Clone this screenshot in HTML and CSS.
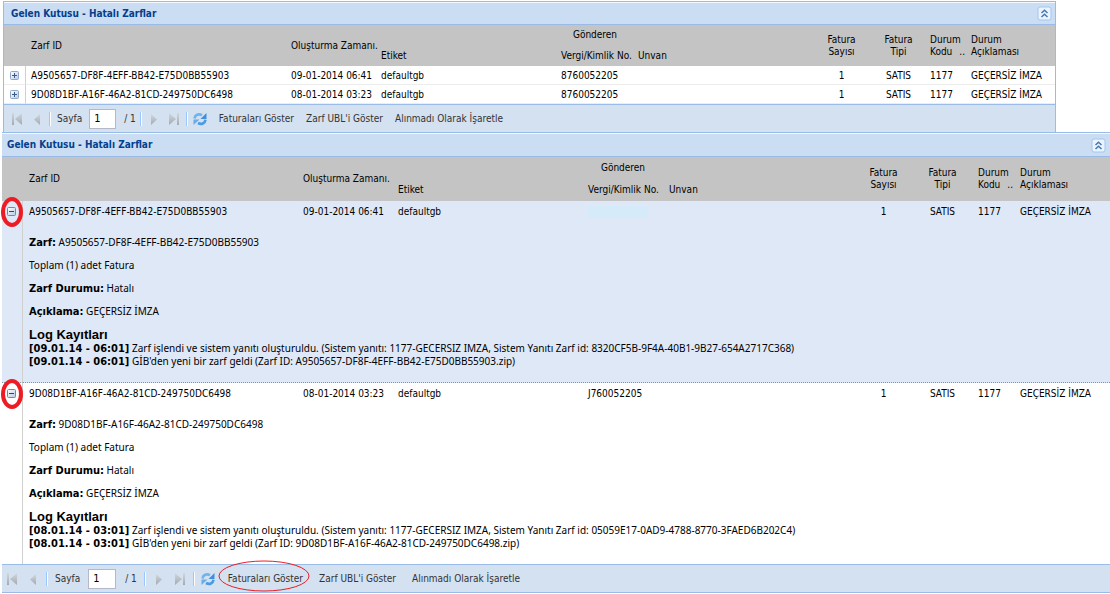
FILE: index.html
```
<!DOCTYPE html>
<html lang="tr">
<head>
<meta charset="utf-8">
<title>Gelen Kutusu - Hatalı Zarflar</title>
<link rel="stylesheet" href="styles.css">
</head>
<body>
<svg width="0" height="0" class="defs" aria-hidden="true">
  <defs>
    <linearGradient id="gray" x1="0" y1="0" x2="0" y2="1"><stop offset="0" stop-color="#d3d7dc"/><stop offset="1" stop-color="#a4aab1"/></linearGradient>
    <linearGradient id="box" x1="0" y1="0" x2="1" y2="1"><stop offset="0" stop-color="#fff"/><stop offset="1" stop-color="#b5cbe6"/></linearGradient>
    <symbol id="first" viewBox="0 0 16 16"><path d="M3 2h2v12H3zM13 2v12L6 8z" fill="url(#gray)"/></symbol>
    <symbol id="prev" viewBox="0 0 16 16"><path d="M11 3v11L5 8.500z" fill="url(#gray)"/></symbol>
    <symbol id="next" viewBox="0 0 16 16"><path d="M5 3v11l6-5.500z" fill="url(#gray)"/></symbol>
    <symbol id="last" viewBox="0 0 16 16"><path d="M11 2h2v12h-2zM3 2v12l7-6z" fill="url(#gray)"/></symbol>
    <symbol id="refresh" viewBox="0 0 16 16">
      <path d="M2.500 7.500C3 4 6.500 2.200 10 4.200" fill="none" stroke="#6fb4ee" stroke-width="2.600"/>
      <path d="M14.500 2v6H8.500z" fill="#3f8fdc"/>
      <path d="M13.500 8.800C13 12.400 9.500 14 6 12" fill="none" stroke="#4a9be4" stroke-width="2.600"/>
      <path d="M1.500 14V8.500h6z" fill="#66adea"/>
    </symbol>
    <symbol id="plus" viewBox="0 0 9 9"><rect x=".5" y=".5" width="8" height="8" rx="1" fill="url(#box)" stroke="#8fa8c8"/><path d="M2 4.500h5M4.500 2v5" stroke="#3d5a80"/></symbol>
    <symbol id="minus" viewBox="0 0 9 9"><rect x=".5" y=".5" width="8" height="8" rx="1" fill="url(#box)" stroke="#6c8ab0"/><path d="M2 4.500h5" stroke="#26466f"/></symbol>
    <symbol id="collapse" viewBox="0 0 15 15"><rect x="1" y="1" width="13" height="13" rx="2" fill="#eaf4fe" stroke="#a3c6ee"/><path d="M4.500 7l3-2.800 3 2.800M4.500 11l3-2.800 3 2.800" fill="none" stroke="#4677b0" stroke-width="1.500"/></symbol>
  </defs>
</svg>

<section class="panel panel-top">
  <header class="title"><h1>Gelen Kutusu - Hatalı Zarflar</h1><button class="icon-btn" aria-label="Daralt"><svg width="15" height="15"><use href="#collapse"/></svg></button></header>
  <table>
    <colgroup><col class="c-exp"><col class="c-id"><col class="c-date"><col class="c-tag"><col class="c-tax"><col><col class="c-count"><col class="c-type"><col class="c-code"><col class="c-desc"></colgroup>
    <thead>
      <tr><th rowspan="2"></th><th rowspan="2">Zarf ID</th><th rowspan="2">Oluşturma Zamanı.</th><th></th><th class="mid">Gönderen</th><th></th><th rowspan="2" class="mid">Fatura<br>Sayısı</th><th rowspan="2" class="mid">Fatura<br>Tipi</th><th rowspan="2"><span class="code">Durum <span>Kodu</span><span>..</span></span></th><th rowspan="2">Durum<br>Açıklaması</th></tr>
      <tr><th>Etiket</th><th>Vergi/Kimlik No.</th><th>Unvan</th></tr>
    </thead>
    <tbody>
      <tr><td class="exp"><button class="icon-btn" aria-label="Genişlet"><svg width="9" height="9"><use href="#plus"/></svg></button></td><td>A9505657-DF8F-4EFF-BB42-E75D0BB55903</td><td>09-01-2014 06:41</td><td>defaultgb</td><td>8760052205</td><td></td><td class="mid">1</td><td class="mid">SATIS</td><td>1177</td><td>GEÇERSİZ İMZA</td></tr>
      <tr><td class="exp"><button class="icon-btn" aria-label="Genişlet"><svg width="9" height="9"><use href="#plus"/></svg></button></td><td>9D08D1BF-A16F-46A2-81CD-249750DC6498</td><td>08-01-2014 03:23</td><td>defaultgb</td><td>8760052205</td><td></td><td class="mid">1</td><td class="mid">SATIS</td><td>1177</td><td>GEÇERSİZ İMZA</td></tr>
    </tbody>
  </table>
  <footer class="bar">
    <button class="icon-btn" aria-label="İlk sayfa"><svg width="16" height="16"><use href="#first"/></svg></button>
    <button class="icon-btn" aria-label="Önceki sayfa"><svg width="16" height="16"><use href="#prev"/></svg></button>
    <i class="sep"></i>
    <label for="page1">Sayfa</label><input id="page1" type="text" value="1"><span class="total">/ 1</span>
    <i class="sep"></i>
    <button class="icon-btn" aria-label="Sonraki sayfa"><svg width="16" height="16"><use href="#next"/></svg></button>
    <button class="icon-btn" aria-label="Son sayfa"><svg width="16" height="16"><use href="#last"/></svg></button>
    <i class="sep"></i>
    <button class="icon-btn" aria-label="Yenile"><svg width="16" height="16"><use href="#refresh"/></svg></button>
    <div class="actions"><button>Faturaları Göster</button><button>Zarf UBL'i Göster</button><button>Alınmadı Olarak İşaretle</button></div>
  </footer>
</section>

<section class="panel panel-full">
  <header class="title"><h1>Gelen Kutusu - Hatalı Zarflar</h1><button class="icon-btn" aria-label="Daralt"><svg width="15" height="15"><use href="#collapse"/></svg></button></header>
  <table>
    <colgroup><col class="c-exp"><col class="c-id"><col class="c-date"><col class="c-tag"><col class="c-tax"><col><col class="c-count"><col class="c-type"><col class="c-code"><col class="c-desc"></colgroup>
    <thead>
      <tr><th rowspan="2"></th><th rowspan="2">Zarf ID</th><th rowspan="2">Oluşturma Zamanı.</th><th></th><th class="mid">Gönderen</th><th></th><th rowspan="2" class="mid">Fatura<br>Sayısı</th><th rowspan="2" class="mid">Fatura<br>Tipi</th><th rowspan="2"><span class="code">Durum <span>Kodu</span><span>..</span></span></th><th rowspan="2">Durum<br>Açıklaması</th></tr>
      <tr><th>Etiket</th><th>Vergi/Kimlik No.</th><th>Unvan</th></tr>
    </thead>
    <tbody class="selected">
      <tr><td class="exp" rowspan="2"><span class="marked"><button class="icon-btn" aria-label="Daralt"><svg width="9" height="9"><use href="#minus"/></svg></button><svg class="ring" width="22" height="30" viewBox="0 0 22 30"><ellipse cx="11" cy="15" rx="9" ry="13"/></svg></span></td><td>A9505657-DF8F-4EFF-BB42-E75D0BB55903</td><td>09-01-2014 06:41</td><td>defaultgb</td><td><span class="smudge"></span></td><td></td><td class="mid">1</td><td class="mid">SATIS</td><td>1177</td><td>GEÇERSİZ İMZA</td></tr>
      <tr><td class="detail" colspan="9">
        <p><b>Zarf:</b> A9505657-DF8F-4EFF-BB42-E75D0BB55903</p>
        <p>Toplam (1) adet Fatura</p>
        <p><b>Zarf Durumu:</b> Hatalı</p>
        <p><b>Açıklama:</b> GEÇERSİZ İMZA</p>
        <h2>Log Kayıtları</h2>
        <div><b>[09.01.14 - 06:01]</b> Zarf işlendi ve sistem yanıtı oluşturuldu. (Sistem yanıtı: 1177-GECERSIZ IMZA, Sistem Yanıtı Zarf id: 8320CF5B-9F4A-40B1-9B27-654A2717C368)</div>
        <div><b>[09.01.14 - 06:01]</b> GİB'den yeni bir zarf geldi (Zarf ID: A9505657-DF8F-4EFF-BB42-E75D0BB55903.zip)</div>
      </td></tr>
    </tbody>
    <tbody>
      <tr><td class="exp" rowspan="2"><span class="marked"><button class="icon-btn" aria-label="Daralt"><svg width="9" height="9"><use href="#minus"/></svg></button><svg class="ring" width="22" height="30" viewBox="0 0 22 30"><ellipse cx="11" cy="15" rx="9" ry="13"/></svg></span></td><td>9D08D1BF-A16F-46A2-81CD-249750DC6498</td><td>08-01-2014 03:23</td><td>defaultgb</td><td>J760052205</td><td></td><td class="mid">1</td><td class="mid">SATIS</td><td>1177</td><td>GEÇERSİZ İMZA</td></tr>
      <tr><td class="detail" colspan="9">
        <p><b>Zarf:</b> 9D08D1BF-A16F-46A2-81CD-249750DC6498</p>
        <p>Toplam (1) adet Fatura</p>
        <p><b>Zarf Durumu:</b> Hatalı</p>
        <p><b>Açıklama:</b> GEÇERSİZ İMZA</p>
        <h2>Log Kayıtları</h2>
        <div><b>[08.01.14 - 03:01]</b> Zarf işlendi ve sistem yanıtı oluşturuldu. (Sistem yanıtı: 1177-GECERSIZ IMZA, Sistem Yanıtı Zarf id: 05059E17-0AD9-4788-8770-3FAED6B202C4)</div>
        <div><b>[08.01.14 - 03:01]</b> GİB'den yeni bir zarf geldi (Zarf ID: 9D08D1BF-A16F-46A2-81CD-249750DC6498.zip)</div>
      </td></tr>
    </tbody>
  </table>
  <footer class="bar">
    <button class="icon-btn" aria-label="İlk sayfa"><svg width="16" height="16"><use href="#first"/></svg></button>
    <button class="icon-btn" aria-label="Önceki sayfa"><svg width="16" height="16"><use href="#prev"/></svg></button>
    <i class="sep"></i>
    <label for="page2">Sayfa</label><input id="page2" type="text" value="1"><span class="total">/ 1</span>
    <i class="sep"></i>
    <button class="icon-btn" aria-label="Sonraki sayfa"><svg width="16" height="16"><use href="#next"/></svg></button>
    <button class="icon-btn" aria-label="Son sayfa"><svg width="16" height="16"><use href="#last"/></svg></button>
    <i class="sep"></i>
    <button class="icon-btn" aria-label="Yenile"><svg width="16" height="16"><use href="#refresh"/></svg></button>
    <div class="actions"><span class="marked"><button>Faturaları Göster</button><svg class="oval" width="92" height="38" viewBox="0 0 92 38"><ellipse cx="45" cy="16" rx="45" ry="15"/></svg></span><button>Zarf UBL'i Göster</button><button>Alınmadı Olarak İşaretle</button></div>
  </footer>
</section>
</body>
</html>
```
FILE: styles.css
```
* { box-sizing: border-box; }

body {
  margin: 0;
  padding-top: 1px;
  background: #fff;
  color: #000;
  font: 10px/12px "DejaVu Sans Condensed", "Noto Sans", sans-serif;
}

.defs { position: absolute; }
svg { display: block; overflow: visible; }

button {
  padding: 0;
  border: 0;
  background: none;
  color: #333;
  font: inherit;
  white-space: nowrap;
}

.icon-btn { flex: none; display: block; }

/* Panels */
.panel { border-top: 1px solid #99bbe8; }
.panel-top {
  margin: 0 54px 0 3px;
  border-left: 1px solid #99bbe8;
  border-right: 1px solid #99bbe8;
}
.panel-full { margin-left: 2px; }

.title {
  display: flex;
  justify-content: space-between;
  align-items: center;
  height: 23px;
  padding: 0 3px 0 7px;
  border-top: 1px solid #f4f9ff;
  border-bottom: 1px solid #99bbe8;
  background: #cbddf3;
}
.panel-full .title { height: 24px; padding: 0 4px 0 5px; }

h1 {
  margin: 0;
  color: #04408c;
  font-size: 10px;
  font-weight: bold;
}

/* Grids */
table {
  width: 100%;
  border-collapse: separate;
  border-spacing: 0;
  table-layout: fixed;
}

th, td {
  padding: 0 0 0 5px;
  text-align: left;
  font-weight: normal;
  vertical-align: middle;
  white-space: nowrap;
}
.panel-full th, .panel-full td { padding-left: 6px; }
th { background: #c4c4c4; }
thead tr { height: 20px; }
thead tr + tr { height: 21px; }
.panel-full thead tr { height: 22px; }
.panel .mid { padding-left: 5px; padding-right: 4px; text-align: center; }

.code {
  display: flex;
  flex-wrap: wrap;
  justify-content: space-between;
  padding-right: 1px;
}

.panel-top tbody tr { height: 19px; }
.panel-top td { padding-top: 1px; border-bottom: 1px solid #ededed; }
.panel .exp {
  padding: 0 0 0 6px;
  border-right: 1px solid #d0d0d0;
}
.panel-full .exp { padding: 6px 0 0 5px; vertical-align: top; }
.panel-full tbody tr { height: 22px; }

.c-exp { width: 22px; }
.c-id { width: 260px; }
.c-date { width: 90px; }
.c-tag { width: 180px; }
.c-tax { width: 77px; }
.c-count { width: 60px; }
.c-type { width: 54px; }
.c-code { width: 41px; }
.c-desc { width: 89px; }

.panel-full .c-exp { width: 21px; }
.panel-full .c-id { width: 274px; }
.panel-full .c-date { width: 95px; }
.panel-full .c-tag { width: 190px; }
.panel-full .c-tax { width: 81px; }
.panel-full .c-count { width: 58px; }
.panel-full .c-type { width: 60px; }
.panel-full .c-code { width: 42px; }
.panel-full .c-desc { width: 96px; }

.selected td { background: #dfe8f6; }
.selected .detail, .selected .exp { border-bottom: 1px dotted #8a93a3; }
.smudge { display: block; width: 60px; height: 12px; background: #d6ebf9; }

.panel-full .detail {
  padding: 13px 0 14px 6px;
  font-family: "Noto Sans", sans-serif;
  white-space: normal;
}
.detail p { margin: 0 0 10px; line-height: 13px; }
.detail b {
  font: bold 11px/12px "DejaVu Sans Condensed", "Noto Sans", sans-serif;
}
.detail h2 {
  margin: 0;
  font: bold 13px/14px "Liberation Sans", sans-serif;
}

/* Paging toolbar */
.bar {
  display: flex;
  align-items: center;
  gap: 4px;
  height: 28px;
  padding-left: 5px;
  border-top: 1px solid #99bbe8;
  border-bottom: 1px solid #99bbe8;
  background: #d3e1f1;
  color: #333;
}
.panel-top .bar { border-bottom: 0; }
.panel-full .bar { gap: 5px; height: 29px; padding-left: 2px; }

.sep {
  width: 2px;
  height: 14px;
  border-left: 1px solid #98c8ff;
  border-right: 1px solid #fff;
}

.bar label { margin-left: 2px; }
.bar input {
  width: 27px;
  height: 20px;
  margin: 0 4px 0 3px;
  padding: 0 4px;
  border: 1px solid #b5b8c8;
  background: #fff;
  font: 11px "DejaVu Sans Condensed", "Noto Sans", sans-serif;
}
.panel-full .bar input { width: 28px; }
.panel-full .total { margin-right: 2px; }

.actions { display: flex; gap: 12px; margin-left: 7px; }
.panel-full .actions { gap: 16px; }

/* Red annotations drawn round controls */
.marked { position: relative; display: block; }
.ring, .oval {
  position: absolute;
  top: 50%;
  left: 50%;
  transform: translate(-50%, -50%);
  fill: none;
  stroke: #ed1c24;
  pointer-events: none;
}
.ring { stroke-width: 4; }
.marked:has(.ring) { width: 9px; }
```
